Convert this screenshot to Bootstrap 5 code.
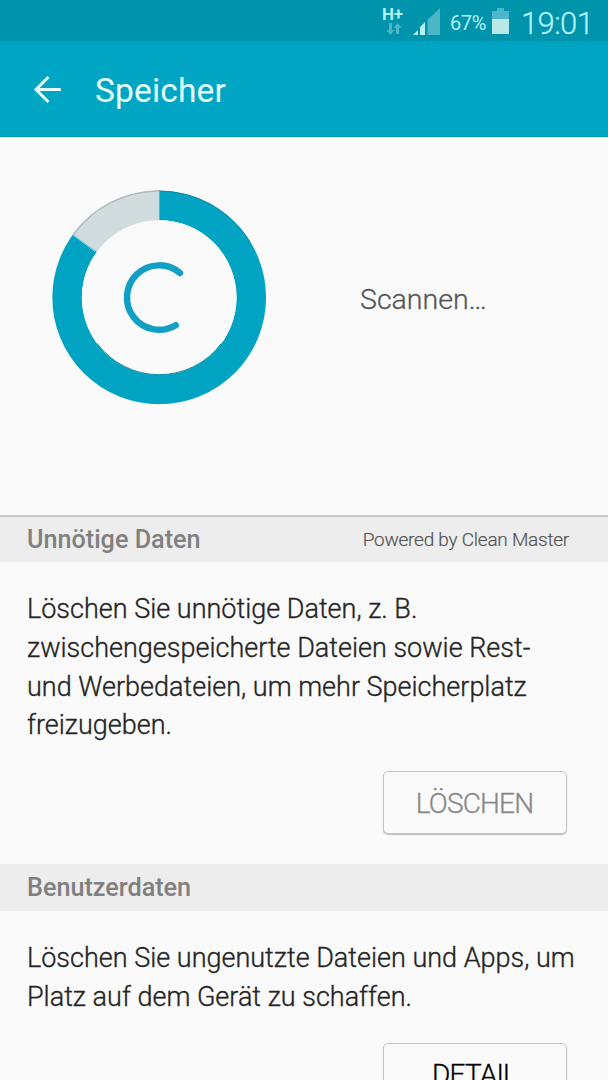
<!DOCTYPE html>
<html lang="de">
<head>
<meta charset="utf-8">
<meta name="viewport" content="width=device-width, initial-scale=1">
<title>Speicher</title>
<link rel="stylesheet" href="https://cdn.jsdelivr.net/npm/bootstrap@5.3.0/dist/css/bootstrap.min.css">
<style>
body { font-family: Roboto, "Liberation Sans", sans-serif; background: #fafafa; color: #252525; height: 1080px; overflow: hidden; }
.statusbar { height: 41px; background: #0093ac; color: #b2f0f5; }
.statusbar svg, .appbar svg { display: block; }
.net { width: 22px; margin-right: 9px; padding-top: 6px; }
.net-type { font-size: 17px; font-weight: 700; line-height: 16px; height: 17px; letter-spacing: -.3px; }
.percent { font-size: 20px; line-height: 20px; margin: 13px 6px 0 9px; width: 36px; letter-spacing: -.4px; }
.clock { font-size: 31px; font-weight: 300; line-height: 31px; margin-left: 12px; width: 71px; margin-top: 8px; letter-spacing: -.6px; -webkit-text-stroke: .3px; }
.appbar { height: 96px; background: #00a5c3; color: #e6ffff; border-bottom: 1px solid #0099b3; padding-left: 33px; }
.appbar h1 { font-size: 33.5px; font-weight: 400; line-height: 40px; margin: 4px 0 0 33px; letter-spacing: .15px; }
.overview { height: 378px; padding: 52px 0 0 51px; }
.scan-text { font-size: 28.5px; font-weight: 300; line-height: 34px; color: #555; margin: 94px 0 0 93px; -webkit-text-stroke: .3px; }
.section-head { height: 47px; background: #ededed; padding: 0 39px 0 27px; color: #808080; }
.section-head h2 { font-size: 25.2px; font-weight: 500; line-height: 30px; }
.first-head { border-top: 2px solid #c9c9c9; }
.powered { font-size: 19px; font-weight: 300; line-height: 24px; color: #555; letter-spacing: -.25px; -webkit-text-stroke: .2px; }
.desc { font-size: 27px; font-weight: 300; line-height: 38.8px; margin: 0; padding: 28px 0 0 27px; white-space: nowrap; -webkit-text-stroke: .35px; }
.action { width: 184px; height: 63px; border: 1px solid #c4c4c4; border-radius: 5px; background: #fafafa; box-shadow: 0 1px 1px #bbb; font-size: 28px; font-weight: 300; line-height: 34px; padding: 2px 0 0; margin-right: 41.5px; color: #000; letter-spacing: -.8px; -webkit-text-stroke: .3px; }
.action:disabled { color: #888; border-color: #c4c4c4; background: #fafafa; opacity: 1; }
.action-row { margin-top: 26px; }
.user-data { margin-top: 30px; }
.user-data h2 { padding-top: 1px; }
</style>
</head>
<body>
<header>
  <div class="statusbar d-flex justify-content-end pe-3">
    <div class="net">
      <div class="net-type">H+</div>
      <svg width="22" height="13" viewBox="0 0 22 13" fill="#4bb7c8"><path d="M7 0h3v7h2.500l-4 5-4-5H7zM14 11h3V5h2.500l-4-5-4 5H14z"/></svg>
    </div>
    <svg width="28" height="36" viewBox="0 0 28 36"><path d="M14.500 35V20L27 8v27z" fill="#4bb7c8"/><path d="M0 35l5-5v5zM7 35v-8l5-5v13z" fill="#b8f0f2"/></svg>
    <div class="percent">67%</div>
    <svg width="17" height="36" viewBox="0 0 17 36"><path d="M0 11h5V8h7v3h5v8H0z" fill="#4bb7c8"/><path d="M0 19h17v15H0z" fill="#b8e8e8"/></svg>
    <div class="clock">19:01</div>
  </div>
  <div class="appbar d-flex align-items-center">
    <svg width="29" height="28" viewBox="0 0 29 28" fill="none" stroke="#e6ffff" stroke-width="3"><path d="M28 14.500H3M15.500 2L3 14.500l12.500 12.500"/></svg>
    <h1>Speicher</h1>
  </div>
</header>
<main>
  <section class="overview d-flex align-items-start">
    <svg width="216" height="218" viewBox="0 0 216 218" fill="none">
      <circle cx="108.200" cy="108.500" r="92.100" stroke="#00a4c2" stroke-width="29.500"/>
      <path d="M108 108.500V1.500A107 107 0 0 0 22 45.500z" fill="#d0dcdd"/>
      <path d="M108 2A106.500 106.500 0 0 0 22 46" stroke="#b4bcbd" stroke-width="1.500"/>
      <path d="M108 2A106.500 106.500 0 0 1 199 53" stroke="#078ba3" stroke-width="1"/>
      <circle cx="108.200" cy="108.500" r="77.300" fill="#fafafa"/>
      <path d="M46.200 154.600A77.300 77.300 0 0 0 170.200 154.600" stroke="#078ba3" stroke-width="1"/>
      <path d="M108 2V31M22 46l22 16.500" stroke="#a9e1e9" stroke-width=".8"/>
      <path d="M129 84A32.200 32.200 0 1 0 124.700 136.200" stroke="#119fc5" stroke-width="6.500" stroke-linecap="round"/>
    </svg>
    <div class="scan-text">Scannen…</div>
  </section>
  <section>
    <div class="section-head first-head d-flex align-items-center justify-content-between">
      <h2 class="m-0">Unnötige Daten</h2><span class="powered">Powered by Clean Master</span>
    </div>
    <p class="desc">Löschen Sie unnötige Daten, z. B.<br>zwischengespeicherte Dateien sowie Rest-<br>und Werbedateien, um mehr Speicherplatz<br>freizugeben.</p>
    <div class="action-row d-flex justify-content-end"><button class="btn action" disabled>LÖSCHEN</button></div>
  </section>
  <section class="user-data">
    <div class="section-head d-flex align-items-center"><h2 class="m-0">Benutzerdaten</h2></div>
    <p class="desc">Löschen Sie ungenutzte Dateien und Apps, um<br>Platz auf dem Gerät zu schaffen.</p>
    <div class="action-row d-flex justify-content-end"><button class="btn action">DETAIL</button></div>
  </section>
</main>
<script src="https://cdn.jsdelivr.net/npm/bootstrap@5.3.0/dist/js/bootstrap.bundle.min.js"></script>
</body>
</html>
